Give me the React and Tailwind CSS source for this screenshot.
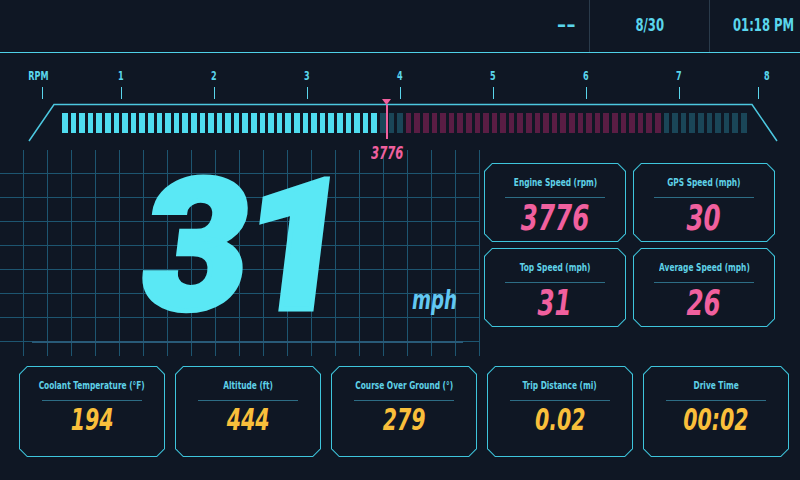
import React from 'react';

const rpm = 3776;
const ticks = [
  { label: 'RPM', shift: '-translate-x-[4px]' },
  { label: '1', shift: '' },
  { label: '2', shift: '' },
  { label: '3', shift: '' },
  { label: '4', shift: '' },
  { label: '5', shift: '' },
  { label: '6', shift: '' },
  { label: '7', shift: '' },
  { label: '8', shift: 'translate-x-[9px]' },
];

const sideCards = [
  { title: 'Engine Speed (rpm)', value: '3776' },
  { title: 'GPS Speed (mph)', value: '30' },
  { title: 'Top Speed (mph)', value: '31' },
  { title: 'Average Speed (mph)', value: '26' },
];

const bottomCards = [
  { title: 'Coolant Temperature (°F)', value: '194' },
  { title: 'Altitude (ft)', value: '444' },
  { title: 'Course Over Ground (°)', value: '279' },
  { title: 'Trip Distance (mi)', value: '0.02' },
  { title: 'Drive Time', value: '00:02' },
];

const barColor = (i) => {
  if (i < Math.floor(rpm / 100)) return 'bg-[#4fdcef]';
  if (i >= 40 && i < 70) return 'bg-[#5a1d44]';
  return 'bg-[#1a4658]';
};

const Card = ({ title, value, valueClass }) => (
  <div className="h-full bg-[#3ec5dc] p-px [clip-path:polygon(8px_0,calc(100%_-_8px)_0,100%_8px,100%_calc(100%_-_8px),calc(100%_-_8px)_100%,8px_100%,0_calc(100%_-_8px),0_8px)]">
    <div className="h-full flex flex-col items-center pt-[12px] bg-[#0f1724] [clip-path:polygon(7.4px_0,calc(100%_-_7.4px)_0,100%_7.4px,100%_calc(100%_-_7.4px),calc(100%_-_7.4px)_100%,7.4px_100%,0_calc(100%_-_7.4px),0_7.4px)]">
      <p className="whitespace-nowrap scale-x-[0.75] text-[11px] leading-[14px] font-bold text-[#5fd2e8]">{title}</p>
      <div className="mt-[7px] w-[100px] h-px bg-[#2d6d85]" />
      <p className={valueClass}>{value}</p>
    </div>
  </div>
);

export default function App() {
  const needleX = 64 + (rpm / 8000) * 684;

  return (
    <div className="w-[800px] h-[480px] overflow-hidden bg-[#0f1724] text-[#5ad6ec] [font-family:'DejaVu_Sans_Condensed','DejaVu_Sans',sans-serif]">
      {/* status bar */}
      <div className="h-[53px] flex justify-end border-b border-[#4fd1e8]">
        <div className="flex items-center pr-[13px] text-[17px] font-bold">
          <span className="origin-right scale-x-[1.5]">--</span>
        </div>
        <div className="w-[120px] flex items-center justify-center border-l border-[#2a3b4b] text-[17px] font-bold">
          <span className="scale-x-[0.76]">8/30</span>
        </div>
        <div className="w-[91px] flex items-center pl-[23px] border-l border-[#2a3b4b] text-[17px] font-bold whitespace-nowrap">
          <span className="origin-left scale-x-[0.76]">01:18 PM</span>
        </div>
      </div>

      {/* rpm ruler */}
      <div className="grid grid-cols-[79px_93px_93px_93px_93px_93px_93px_79px_1px] pl-[42px] pt-[17px]">
        {ticks.map((t) => (
          <div key={t.label} className="w-0 flex flex-col items-center">
            <span className={`text-[12px] leading-[12px] font-bold whitespace-nowrap ${t.shift}`}>
              <span className="inline-block scale-x-[0.75]">{t.label}</span>
            </span>
            <div className="mt-[5px] w-px h-[12px] bg-[#5ad6ec]" />
          </div>
        ))}
      </div>

      {/* rpm bar */}
      <div className="relative h-[40px] mt-[4px]">
        <svg className="absolute inset-0" width="800" height="40" viewBox="0 0 800 40">
          <polyline points="29,38 54,1.5 752,1.5 777,38" fill="none" stroke="#4cc8e0" strokeWidth="1.5" />
        </svg>
        <div className="flex gap-[3px] h-[30px] pt-[10px] pl-[62px] pr-[54px]">
          {Array.from({ length: 80 }, (_, i) => (
            <div key={i} className={`flex-1 ${barColor(i)}`} />
          ))}
        </div>
        <div className="absolute top-[-4px] w-0 flex flex-col items-center" style={{ left: needleX }}>
          <svg width="9" height="6" viewBox="0 0 9 6">
            <polygon points="0,0 9,0 4.5,6" fill="#f0609e" />
          </svg>
          <div className="w-[2px] h-[34px] bg-[#f0609e]" />
          <span className="mt-[5px] scale-x-[0.76] text-[17px] leading-[18px] font-bold italic text-[#f0609e]">{rpm}</span>
        </div>
      </div>

      {/* middle */}
      <div className="flex mt-[7px] h-[206px]">
        <div className="w-[480px] h-full flex flex-col bg-[linear-gradient(to_right,#1d5570_1px,transparent_1px),linear-gradient(to_bottom,#1d5570_1px,transparent_1px)] bg-[size:24px_24px] bg-[position:23px_23px]">
          <div className="flex items-baseline pl-[144px] pt-[22px]">
            <span className="inline-block -skew-x-[7deg] text-[183px] leading-[150px] font-black tracking-[-6px] text-[#5ae8f5] [-webkit-text-stroke:5px_#5ae8f5] [font-family:Roboto,sans-serif]">31</span>
            <span className="ml-[68px] scale-x-[0.78] origin-left text-[26px] font-bold italic text-[#62c8f2]">mph</span>
          </div>
          <div className="mt-[19px] ml-[32px] w-[431px] h-[2px] bg-[#285a78]" />
        </div>
        <div className="grid grid-cols-[142px_142px] grid-rows-[79px_79px] gap-x-[7px] gap-y-[6px] pl-[4px] pt-[13px]">
          {sideCards.map((c) => (
            <Card key={c.title} {...c} valueClass="mt-[2px] scale-x-[0.76] text-[36px] leading-none font-bold italic text-[#f0609e]" />
          ))}
        </div>
      </div>

      {/* bottom cards */}
      <div className="flex gap-[10px] pl-[19px] mt-[10px] h-[91px]">
        {bottomCards.map((c) => (
          <div key={c.title} className="w-[146px] h-full">
            <Card {...c} valueClass="mt-[4px] scale-x-[0.76] text-[30px] leading-none font-bold italic text-[#f9bf3b]" />
          </div>
        ))}
      </div>
    </div>
  );
}
